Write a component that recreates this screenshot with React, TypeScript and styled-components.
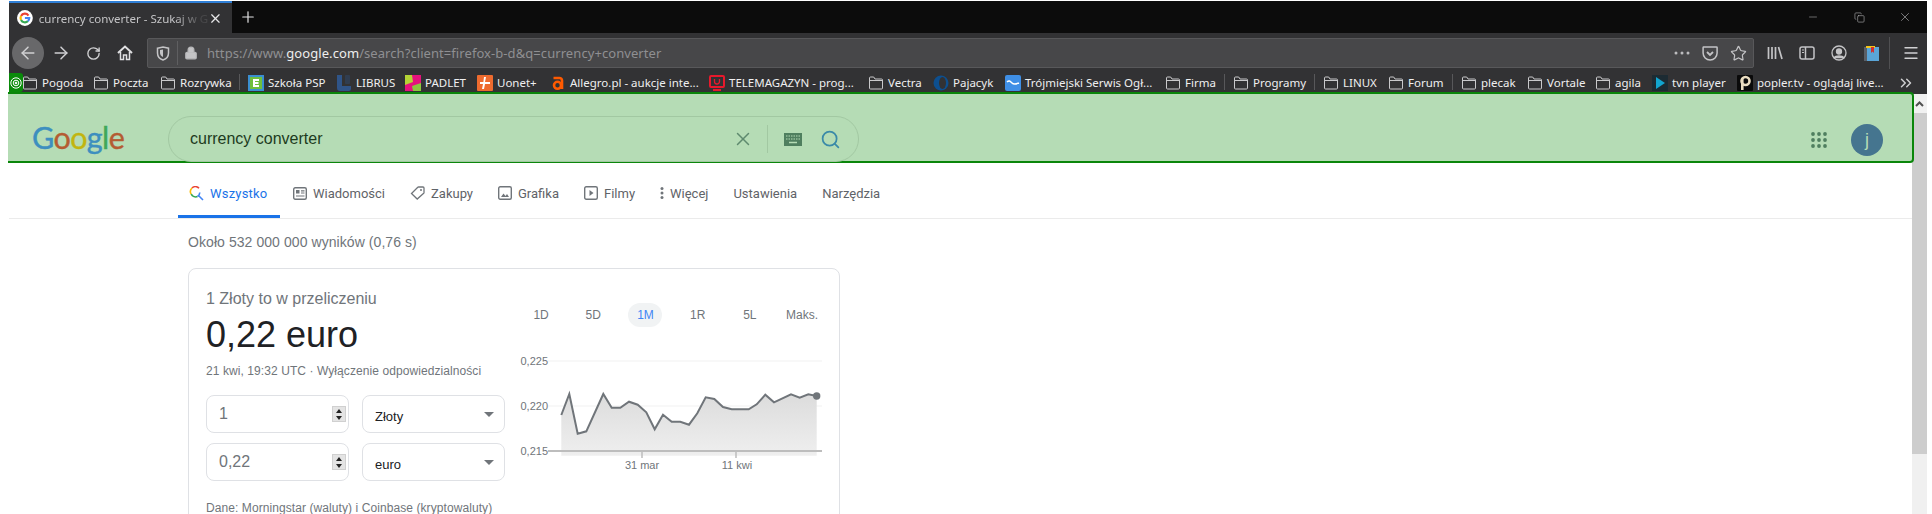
import * as React from "react";
import styled, { createGlobalStyle } from "styled-components";
import { ArrowLeft, ArrowRight, RotateCw, Star, X, Plus, Minus, Search, Copy, Menu, ChevronsRight, Lock } from "lucide-react";

const Global = createGlobalStyle`
    html, body {
        margin: 0;
        padding: 0;
        background: #fff;
        overflow: hidden;
    }
    body {
        width: 1932px;
        height: 514px;
        font-family: "Liberation Sans", Arial, sans-serif;
    }
`;

const Frame = styled.div`
    display: flex;
    flex-direction: column;
    height: 514px;
    padding: 1px 5px 0 9px;
    box-sizing: border-box;
    overflow: hidden;
`;

const TitleBar = styled.div`
    display: flex;
    align-items: stretch;
    height: 32px;
    background: #0c0c0c;
    color: #d7d7d9;
`;

const ActiveTab = styled.div`
    display: flex;
    align-items: center;
    width: 223px;
    box-sizing: border-box;
    padding: 0 9px 0 8px;
    background: #323234;
    border-top: 2px solid #2f7fd6;
`;

const TabTitle = styled.div`
    flex: 1;
    margin-left: 6px;
    white-space: nowrap;
    font-family: "Noto Sans", sans-serif;
    font-size: 11.5px;
    color: #c4c4c6;
    -webkit-mask-image: linear-gradient(to right, #000 80%, rgba(0, 0, 0, 0.15) 96%);
    mask-image: linear-gradient(to right, #000 80%, rgba(0, 0, 0, 0.15) 96%);
`;

const NewTab = styled.div`
    display: flex;
    align-items: center;
    margin-left: 7px;
    color: #e4e4e6;
`;

const WindowControls = styled.div`
    display: flex;
    margin-left: auto;
    margin-right: -1px;
`;

const WindowButton = styled.div`
    display: flex;
    align-items: center;
    justify-content: center;
    width: 46px;
    color: #a8a8aa;
`;

const Toolbar = styled.div`
    display: flex;
    align-items: center;
    height: 40px;
    padding-left: 3px;
    background: #323234;
    color: #d0d0d2;
`;

const NavButton = styled.div<{ $round?: boolean }>`
    display: flex;
    align-items: center;
    justify-content: center;
    width: 32px;
    height: 32px;
    border-radius: 50%;
    background: ${(p) => (p.$round ? "#68686a" : "transparent")};
    margin-right: ${(p) => (p.$round ? "1px" : "0")};
`;

const UrlBar = styled.div`
    flex: 1;
    display: flex;
    align-items: center;
    height: 30px;
    margin: 0 5px 0 6px;
    box-sizing: border-box;
    border: 1px solid #58585a;
    border-radius: 2px;
    background: #474749;
    color: #b8b8ba;
`;

const UrlIcon = styled.div<{ $width: number }>`
    display: flex;
    align-items: center;
    justify-content: center;
    width: ${(p) => p.$width}px;
    flex: none;
`;

const UrlDivider = styled.div`
    width: 1px;
    height: 24px;
    background: #5f5f61;
`;

const UrlText = styled.div`
    margin-left: 3px;
    font-family: "Noto Sans", sans-serif;
    font-size: 13px;
    letter-spacing: 0.07px;
    color: #8f8f92;
    white-space: nowrap;
    b {
        font-weight: 400;
        color: #eeeeee;
    }
`;

const UrlActions = styled.div`
    display: flex;
    align-items: center;
    margin-left: auto;
`;

const ToolbarDivider = styled.div`
    width: 1px;
    height: 32px;
    margin: 0 5px 0 2px;
    background: #505052;
`;

const BookmarksBar = styled.div`
    display: flex;
    align-items: flex-start;
    gap: 12px;
    height: 21px;
    padding-right: 12px;
    background: #323234;
    color: #efeff0;
    position: relative;
`;

const GreenTag = styled.div`
    display: flex;
    align-items: center;
    justify-content: center;
    width: 14px;
    height: 19px;
    margin-right: -13px;
    background: #0a8a0a;
    border-radius: 0 3px 3px 0;
`;

const Bookmark = styled.div`
    display: flex;
    align-items: center;
    gap: 4px;
    height: 19px;
`;

const BookmarkIcon = styled.div`
    display: flex;
    align-items: center;
    justify-content: center;
    width: 16px;
    height: 16px;
    flex: none;
`;

const BookmarkLabel = styled.span<{ $width: number }>`
    width: ${(p) => p.$width}px;
    font-family: "Noto Sans", sans-serif;
    font-size: 11.5px;
    line-height: 19px;
    white-space: nowrap;
`;

const BarSeparator = styled.div`
    width: 1px;
    height: 16px;
    margin: 1px -4px 0 -3px;
    background: #58585a;
`;

const MoreBookmarks = styled.div`
    margin-left: auto;
    display: flex;
    align-items: center;
    height: 19px;
    color: #cfcfd1;
`;

const GoogleHeader = styled.header`
    display: flex;
    align-items: flex-start;
    height: 71px;
    margin: -2px 13px 0 -1px;
    padding: 22px 0 0 24px;
    box-sizing: border-box;
    position: relative;
    z-index: 2;
    background: #b5dcb5;
    border: 2px solid #0a860a;
    border-left: 0;
    border-radius: 0 4px 4px 0;
`;

const Logo = styled.div`
    width: 136px;
    margin-top: 3px;
    font-family: Lato, sans-serif;
    font-size: 30.5px;
    line-height: 36px;
    letter-spacing: -0.6px;
    -webkit-text-stroke: 0.4px currentColor;
`;

const LogoLetter = styled.span<{ $color: string }>`
    color: ${(p) => p.$color};
`;

const SearchPill = styled.div`
    display: flex;
    align-items: center;
    width: 691px;
    height: 46px;
    box-sizing: border-box;
    padding-left: 21px;
    border: 1px solid #a2c8a2;
    border-radius: 23px;
    color: #1d3b1d;
    font-size: 16px;
`;

const PillActions = styled.div`
    display: flex;
    align-items: center;
    margin-left: auto;
    color: #5e8a6e;
`;

const PillDivider = styled.div`
    width: 1px;
    height: 28px;
    margin: 0 16px 0 13px;
    background: #a2c8a2;
`;

const PillSearch = styled.div`
    display: flex;
    margin: 0 17px 0 18px;
    color: #3a8aa8;
`;

const HeaderRight = styled.div`
    display: flex;
    align-items: center;
    gap: 24px;
    height: 46px;
    margin-left: auto;
    margin-right: 29px;
    margin-top: 1px;
`;

const Avatar = styled.div`
    display: flex;
    align-items: center;
    justify-content: center;
    width: 32px;
    height: 32px;
    border-radius: 50%;
    background: #45758f;
    color: #b5dcb5;
    font-size: 18px;
`;

const Viewport = styled.div`
    flex: 1;
    display: flex;
    min-height: 0;
`;

const Content = styled.main`
    flex: 1;
    min-width: 0;
`;

const Scrollbar = styled.div`
    display: flex;
    flex-direction: column;
    width: 15px;
    margin-top: -69px;
    height: 420px;
    background: #f0f0f0;
`;

const ScrollArrow = styled.div`
    display: flex;
    align-items: center;
    justify-content: center;
    height: 19px;
    background: #f1f1f1;
`;

const ScrollThumb = styled.div`
    height: 341px;
    background: #cdcdcd;
`;

const TabsRow = styled.nav`
    display: flex;
    align-items: stretch;
    height: 55px;
    padding-left: 169px;
    border-bottom: 1px solid #ebebeb;
`;

const TabItem = styled.div<{ $active?: boolean }>`
    display: flex;
    align-items: center;
    gap: 6px;
    width: ${(p) => (p.$active ? "102px" : "auto")};
    padding: 8px 12px 0 ${(p) => (p.$active ? "11px" : "12px")};
    margin-right: 1px;
    box-sizing: border-box;
    font-family: Roboto, sans-serif;
    font-size: 13px;
    letter-spacing: ${(p) => (p.$active ? "0.2px" : "0")};
    color: ${(p) => (p.$active ? "#1a73e8" : "#5f6368")};
    border-bottom: 3px solid ${(p) => (p.$active ? "#1a73e8" : "transparent")};
`;

const Stats = styled.div`
    margin: 14px 0 17px 179px;
    font-size: 14px;
    line-height: 18px;
    letter-spacing: 0.07px;
    color: #70757a;
`;

const Card = styled.section`
    display: flex;
    width: 652px;
    height: 320px;
    margin-left: 179px;
    box-sizing: border-box;
    border: 1px solid #dfe1e5;
    border-radius: 8px;
`;

const ConverterColumn = styled.div`
    width: 299px;
    margin-left: 17px;
    padding-top: 20px;
`;

const Heading = styled.div`
    font-size: 16px;
    line-height: 20px;
    color: #70757a;
`;

const Amount = styled.div`
    margin-top: 4px;
    font-size: 36px;
    line-height: 44px;
    color: #202124;
`;

const Disclaimer = styled.div`
    margin-top: 6px;
    font-size: 12px;
    line-height: 16px;
    letter-spacing: 0.08px;
    color: #70757a;
`;

const ConverterForm = styled.div`
    display: grid;
    grid-template-columns: 143px 143px;
    gap: 10px 13px;
    margin-top: 16px;
`;

const Field = styled.div`
    display: flex;
    align-items: center;
    height: 38px;
    box-sizing: border-box;
    border: 1px solid #dfe1e5;
    border-radius: 8px;
    padding: 0 1px 0 12px;
`;

const FieldValue = styled.div`
    flex: 1;
    font-size: 16px;
    color: #70757a;
`;

const Spinner = styled.div`
    display: flex;
    flex-direction: column;
    width: 14px;
    height: 16px;
    margin-right: 1px;
    background: #e4e4e4;
    border: 1px solid #d0d0d0;
    box-sizing: border-box;
`;

const SpinnerHalf = styled.div<{ $up?: boolean }>`
    flex: 1;
    display: flex;
    align-items: center;
    justify-content: center;
    &::after {
        content: "";
        border-left: 3px solid transparent;
        border-right: 3px solid transparent;
        ${(p) => (p.$up ? "border-bottom: 4px solid #222;" : "border-top: 4px solid #222;")}
    }
`;

const SelectValue = styled.div`
    flex: 1;
    padding-top: 5px;
    font-size: 13px;
    color: #202124;
`;

const Caret = styled.div`
    margin: 0 9px 0 0;
    border-left: 5px solid transparent;
    border-right: 5px solid transparent;
    border-top: 5px solid #70757a;
`;

const Source = styled.div`
    margin-top: 19px;
    font-size: 12px;
    line-height: 16px;
    letter-spacing: 0.08px;
    color: #70757a;
    white-space: nowrap;
`;

const ChartColumn = styled.div`
    width: 316px;
    margin-left: 10px;
    padding-top: 34px;
`;

const RangeRow = styled.div`
    display: flex;
`;

const RangeButton = styled.div<{ $active?: boolean }>`
    display: flex;
    align-items: center;
    justify-content: center;
    width: 52.2px;
    height: 24px;
    font-size: 12px;
    color: ${(p) => (p.$active ? "#4285f4" : "#70757a")};
`;

const RangePill = styled.span`
    display: flex;
    align-items: center;
    justify-content: center;
    width: 34px;
    height: 24px;
    border-radius: 12px;
    background: #f1f3f4;
`;

const ChartSvg = styled.svg`
    display: block;
    width: 316px;
    height: 140px;
    margin-top: 13px;
    font-family: "Liberation Sans", Arial, sans-serif;
    font-size: 11px;
`;

const Folder = () => (
    <svg width="16" height="14" viewBox="0 0 16 14" fill="none" stroke="#c9c9cb" strokeWidth="1">
        <path d="M1.5 3V2a1 1 0 0 1 1-1h3.2l1.3 2h6.5a1 1 0 0 1 1 1v8a1 1 0 0 1-1 1h-11a1 1 0 0 1-1-1z" />
        <path d="M1.5 4.5h13" />
    </svg>
);

const BookmarkGlyph = ({ kind }: { kind: string }) => {
    switch (kind) {
        case "school":
            return (
                <svg width="16" height="16" viewBox="0 0 16 16">
                    <rect width="16" height="16" fill="#3a8fd0" />
                    <rect x="2" y="2" width="12" height="12" fill="#6fbf3c" />
                    <path d="M5 4h6v2H7v1h3.500v2H7v1h4v2H5z" fill="#fff" />
                </svg>
            );
        case "librus":
            return (
                <svg width="16" height="16" viewBox="0 0 16 16">
                    <path d="M1 0h5v11h9v3a2 2 0 0 1-2 2H4a3 3 0 0 1-3-3z" fill="#2f5488" />
                    <rect x="9" y="0" width="5" height="9" rx="1" fill="#2f5488" opacity="0.35" />
                </svg>
            );
        case "padlet":
            return (
                <svg width="16" height="16" viewBox="0 0 16 16">
                    <rect width="16" height="16" fill="#e5127d" />
                    <path d="M0 0h7l1 7-8 3z" fill="#b4d335" />
                    <path d="M8 16l-1-5 9-3v8z" fill="#8cc63f" />
                </svg>
            );
        case "uonet":
            return (
                <svg width="16" height="16" viewBox="0 0 16 16">
                    <rect width="16" height="16" rx="1" fill="#ee6b2f" />
                    <path d="M9 2l-1 5h5v2H8l-1 5H5l1-5H3V7h3.400L7 2z" fill="#fff" />
                </svg>
            );
        case "allegro":
            return (
                <svg width="16" height="16" viewBox="0 0 16 16" fill="none" stroke="#ff5a00" strokeWidth="2.600">
                    <path d="M3.500 3h6a2.500 2.500 0 0 1 2.500 2.500V14" />
                    <circle cx="7.500" cy="10.300" r="3.500" />
                </svg>
            );
        case "tele":
            return (
                <svg width="16" height="16" viewBox="0 0 16 16" fill="none" stroke="#e8192c" strokeWidth="2">
                    <rect x="1" y="1" width="14" height="11" rx="1" />
                    <path d="M5.500 4v2.500a2.500 2.500 0 0 0 5 0V4" strokeWidth="1.300" />
                    <path d="M4 15h8" />
                </svg>
            );
        case "pajacyk":
            return (
                <svg width="16" height="16" viewBox="0 0 16 16">
                    <circle cx="8" cy="8" r="7.500" fill="#0d4f8f" />
                    <ellipse cx="9.500" cy="8" rx="3.500" ry="6" fill="#323234" />
                </svg>
            );
        case "tricity":
            return (
                <svg width="16" height="16" viewBox="0 0 16 16">
                    <rect width="16" height="16" rx="2" fill="#3f8fe6" />
                    <path d="M2 7c2-2 3-1 5 1s4 1 7 0" fill="none" stroke="#fff" strokeWidth="1.500" />
                </svg>
            );
        case "tvn":
            return (
                <svg width="16" height="16" viewBox="0 0 16 16">
                    <rect width="16" height="16" fill="#1c2b33" />
                    <path d="M4 2l9 6-9 6z" fill="#12a5cf" />
                </svg>
            );
        case "popler":
            return (
                <svg width="16" height="16" viewBox="0 0 16 16">
                    <rect width="16" height="16" rx="1" fill="#0a0a0a" />
                    <circle cx="8.500" cy="6" r="4" fill="none" stroke="#e9dcc0" strokeWidth="2.600" />
                    <rect x="4" y="3" width="2.600" height="12" fill="#e9dcc0" />
                </svg>
            );
        default:
            return <Folder />;
    }
};

const firstBookmarks: [string, string, number][] = [
    ["folder", "Pogoda", 39],
    ["folder", "Poczta", 35],
    ["folder", "Rozrywka", 50],
];

const secondBookmarks: [string, string, number][] = [
    ["school", "Szkoła PSP", 56],
    ["librus", "LIBRUS", 37],
    ["padlet", "PADLET", 40],
    ["uonet", "Uonet+", 41],
    ["allegro", "Allegro.pl - aukcje inte...", 127],
    ["tele", "TELEMAGAZYN - prog...", 127],
    ["folder", "Vectra", 33],
    ["pajacyk", "Pajacyk", 40],
    ["tricity", "Trójmiejski Serwis Ogł...", 128],
    ["folder", "Firma", 30],
];

const thirdBookmarks: [string, string, number][] = [["folder", "Programy", 52]];

const fourthBookmarks: [string, string, number][] = [
    ["folder", "LINUX", 33],
    ["folder", "Forum", 35],
];

const fifthBookmarks: [string, string, number][] = [
    ["folder", "plecak", 34],
    ["folder", "Vortale", 36],
    ["folder", "agila", 25],
    ["tvn", "tvn player", 53],
    ["popler", "popler.tv - oglądaj live...", 126],
];

const renderBookmarks = (items: [string, string, number][]) =>
    items.map(([kind, label, width]) => (
        <Bookmark key={label}>
            <BookmarkIcon>
                <BookmarkGlyph kind={kind} />
            </BookmarkIcon>
            <BookmarkLabel $width={width}>{label}</BookmarkLabel>
        </Bookmark>
    ));

const Favicon = () => (
    <svg width="16" height="16" viewBox="0 0 16 16" fill="none" strokeWidth="2.200">
        <circle cx="8" cy="8" r="8" fill="#fff" stroke="none" />
        <path d="M11.600 5.500A4.400 4.400 0 0 0 4.100 6" stroke="#ea4335" />
        <path d="M4.100 6A4.400 4.400 0 0 0 4.100 10" stroke="#fbbc05" />
        <path d="M4.100 10A4.400 4.400 0 0 0 11 11.200" stroke="#34a853" />
        <path d="M11 11.200A4.400 4.400 0 0 0 12.400 8H8" stroke="#4285f4" />
    </svg>
);

const chartPoints =
    "562.3,415 570.3,394 578.7,433.7 587.3,431.3 604.3,394 612.7,407.7 621.3,407.7 630,401.7 638.7,404.7 647.3,412.3 655.7,429.3 664,414.7 672.7,421.7 681.3,421.7 690,424.7 698.3,413.3 706.7,397.3 715.3,399 724,407 732.7,409.3 749.7,409.3 757.7,404.3 766.3,394.7 775,402.3 792,394.3 800.7,397.7 809.3,394.3 817.7,396";

const ranges = ["1D", "5D", "1M", "1R", "5L", "Maks."];

const App = () => {
    return (
        <>
            <Global />
            <Frame>
                <TitleBar>
                    <ActiveTab>
                        <Favicon />
                        <TabTitle>currency converter - Szukaj w G</TabTitle>
                        <X size={15} strokeWidth={2} color="#e8e8ea" />
                    </ActiveTab>
                    <NewTab>
                        <Plus size={18} strokeWidth={1.6} />
                    </NewTab>
                    <WindowControls>
                        <WindowButton>
                            <Minus size={12} strokeWidth={1.2} />
                        </WindowButton>
                        <WindowButton>
                            <Copy size={11} strokeWidth={1.4} />
                        </WindowButton>
                        <WindowButton>
                            <X size={14} strokeWidth={1.2} />
                        </WindowButton>
                    </WindowControls>
                </TitleBar>

                <Toolbar>
                    <NavButton $round>
                        <ArrowLeft size={20} strokeWidth={1.8} />
                    </NavButton>
                    <NavButton>
                        <ArrowRight size={20} strokeWidth={1.8} />
                    </NavButton>
                    <NavButton>
                        <RotateCw size={15} strokeWidth={2.2} />
                    </NavButton>
                    <NavButton>
                        <svg width="16" height="16" viewBox="0 0 16 16" fill="none" stroke="#e0e0e2" strokeWidth="2">
                            <path d="M1 8l7-6.500L15 8" />
                            <path d="M3.500 7v7.500h3V10h3v4.500h3V7" strokeWidth="1.500" />
                        </svg>
                    </NavButton>
                    <UrlBar>
                        <UrlIcon $width={29}>
                            <svg width="14" height="15" viewBox="0 0 14 15" fill="none" stroke="#c4c4c6" strokeWidth="1.500">
                                <path d="M1.500 2.200L7 1l5.500 1.200V7c0 3.500-2.500 6-5.500 7-3-1-5.500-3.500-5.500-7z" />
                                <path d="M4 4l3-.6V11C5 10 4 8.500 4 7z" fill="#c4c4c6" stroke="none" />
                            </svg>
                        </UrlIcon>
                        <UrlDivider />
                        <UrlIcon $width={26}>
                            <Lock size={14} fill="#c4c4c6" strokeWidth={2} />
                        </UrlIcon>
                        <UrlText>
                            https://www.<b>google.com</b>/search?client=firefox-b-d&amp;q=currency+converter
                        </UrlText>
                        <UrlActions>
                            <UrlIcon $width={28}>
                                <svg width="16" height="4" viewBox="0 0 16 4" fill="#bdbdbf">
                                    <circle cx="2" cy="2" r="1.500" />
                                    <circle cx="8" cy="2" r="1.500" />
                                    <circle cx="14" cy="2" r="1.500" />
                                </svg>
                            </UrlIcon>
                            <UrlIcon $width={28}>
                                <svg width="16" height="15" viewBox="0 0 16 15" fill="none" stroke="#c4c4c6" strokeWidth="1.500">
                                    <path d="M1.500 1h13a.6.6 0 0 1 .6.6V7a7 7 0 0 1-14 0V1.600a.6.6 0 0 1 .4-.6z" />
                                    <path d="M5 6l3 3 3-3" strokeWidth="1.800" />
                                </svg>
                            </UrlIcon>
                            <UrlIcon $width={28}>
                                <Star size={17} strokeWidth={1.7} color="#c4c4c6" />
                            </UrlIcon>
                            <UrlIcon $width={1} />
                        </UrlActions>
                    </UrlBar>
                    <NavButton>
                        <svg width="16" height="14" viewBox="0 0 16 14" fill="none" stroke="#c4c4c6" strokeWidth="1.700">
                            <path d="M1.500 1v12M5 1v12M8.500 1v12M11.500 1l3.500 12" />
                        </svg>
                    </NavButton>
                    <NavButton>
                        <svg width="16" height="14" viewBox="0 0 16 14" fill="none" stroke="#c4c4c6" strokeWidth="1.500">
                            <rect x="1" y="1" width="14" height="12" rx="2" />
                            <path d="M6.500 1v12" />
                            <path d="M3 4h2M3 6.500h2" strokeWidth="1" />
                        </svg>
                    </NavButton>
                    <NavButton>
                        <svg width="16" height="16" viewBox="0 0 16 16" fill="none" stroke="#c4c4c6" strokeWidth="1.300">
                            <circle cx="8" cy="8" r="7" />
                            <circle cx="8" cy="6.500" r="2.500" fill="#c4c4c6" />
                            <path d="M3.500 12.500c1-2 8-2 9 0z" fill="#c4c4c6" />
                        </svg>
                    </NavButton>
                    <NavButton>
                        <svg width="15" height="15" viewBox="0 0 15 15">
                            <rect x="0" y="1" width="4" height="14" fill="#5a5f66" />
                            <rect x="3" y="1" width="12" height="14" fill="#5aa5d8" />
                            <rect x="2" y="0" width="9" height="2" fill="#f5c518" />
                            <path d="M7 1h3v6L8.500 5.500 7 7z" fill="#d0302f" />
                        </svg>
                    </NavButton>
                    <ToolbarDivider />
                    <NavButton>
                        <Menu size={18} strokeWidth={1.8} />
                    </NavButton>
                </Toolbar>

                <BookmarksBar>
                    <GreenTag>
                        <svg width="12" height="12" viewBox="0 0 12 12" fill="none" stroke="#fff" strokeWidth="1">
                            <circle cx="6" cy="6" r="5.200" />
                            <circle cx="6" cy="6" r="2.800" />
                            <circle cx="6" cy="6" r="0.900" fill="#fff" />
                        </svg>
                    </GreenTag>
                    {renderBookmarks(firstBookmarks)}
                    <BarSeparator />
                    {renderBookmarks(secondBookmarks)}
                    <BarSeparator />
                    {renderBookmarks(thirdBookmarks)}
                    <BarSeparator />
                    {renderBookmarks(fourthBookmarks)}
                    <BarSeparator />
                    {renderBookmarks(fifthBookmarks)}
                    <MoreBookmarks>
                        <ChevronsRight size={18} strokeWidth={2} />
                    </MoreBookmarks>
                </BookmarksBar>

                <GoogleHeader>
                    <Logo>
                        <LogoLetter $color="#3d8fbf">G</LogoLetter>
                        <LogoLetter $color="#b45c32">o</LogoLetter>
                        <LogoLetter $color="#c2b50f">o</LogoLetter>
                        <LogoLetter $color="#3d8fbf">g</LogoLetter>
                        <LogoLetter $color="#3fa85a">l</LogoLetter>
                        <LogoLetter $color="#b45c32">e</LogoLetter>
                    </Logo>
                    <SearchPill>
                        currency converter
                        <PillActions>
                            <X size={22} strokeWidth={1.6} />
                            <PillDivider />
                            <svg width="18" height="13" viewBox="0 0 18 13">
                                <rect width="18" height="13" fill="#4f7f5f" />
                                <path d="M2 3h14M2 6h14" stroke="#b5dcb5" strokeWidth="1.200" strokeDasharray="1.500 1" />
                                <path d="M5 9.500h8" stroke="#b5dcb5" strokeWidth="1.500" />
                            </svg>
                            <PillSearch>
                                <Search size={21} strokeWidth={2} />
                            </PillSearch>
                        </PillActions>
                    </SearchPill>
                    <HeaderRight>
                        <svg width="16" height="16" viewBox="0 0 16 16" fill="#4f7f5f">
                            {[2, 8, 14].map((y) =>
                                [2, 8, 14].map((x) => <circle key={`${x}-${y}`} cx={x} cy={y} r="1.900" />)
                            )}
                        </svg>
                        <Avatar>j</Avatar>
                    </HeaderRight>
                </GoogleHeader>

                <Viewport>
                    <Content>
                        <TabsRow>
                            <TabItem $active>
                                <svg width="15" height="15" viewBox="0 0 15 15" fill="none" strokeWidth="1.600">
                                    <path d="M10 2.200A5 5 0 0 0 3 2" stroke="#ea4335" />
                                    <path d="M3 2a5 5 0 0 0-.8 6.200" stroke="#fbbc05" />
                                    <path d="M2.200 8.200A5 5 0 0 0 8.500 10.500" stroke="#34a853" />
                                    <path d="M8.500 10.500a5 5 0 0 0 2.300-4M9.500 9.500l4.500 4.500" stroke="#4285f4" />
                                </svg>
                                Wszystko
                            </TabItem>
                            <TabItem>
                                <svg width="14" height="13" viewBox="0 0 14 13" fill="none" stroke="#70757a" strokeWidth="1.400">
                                    <rect x="0.700" y="0.700" width="12.600" height="11.600" rx="1.500" />
                                    <rect x="3" y="3" width="3.500" height="3.500" fill="#70757a" stroke="none" />
                                    <path d="M8 3.800h3.500M8 6h3.500M3 9h8.500" strokeWidth="1.200" />
                                </svg>
                                Wiadomości
                            </TabItem>
                            <TabItem>
                                <svg width="15" height="14" viewBox="0 0 15 14" fill="none" stroke="#70757a" strokeWidth="1.300">
                                    <path d="M8.500 1H13a1 1 0 0 1 1 1v4.500a1 1 0 0 1-.3.700L7.200 13 1.500 7.500 7.800 1.300A1 1 0 0 1 8.500 1z" />
                                    <circle cx="11" cy="4" r="1" fill="#70757a" stroke="none" />
                                </svg>
                                Zakupy
                            </TabItem>
                            <TabItem>
                                <svg width="14" height="14" viewBox="0 0 14 14" fill="none" stroke="#70757a" strokeWidth="1.400">
                                    <rect x="0.700" y="0.700" width="12.600" height="12.600" rx="1.500" />
                                    <path d="M3 11l2.500-3.500 2 2.500L9 8l2 3z" fill="#70757a" stroke="none" />
                                </svg>
                                Grafika
                            </TabItem>
                            <TabItem>
                                <svg width="14" height="14" viewBox="0 0 14 14" fill="none" stroke="#70757a" strokeWidth="1.400">
                                    <rect x="0.700" y="0.700" width="12.600" height="12.600" rx="1.500" />
                                    <path d="M5.500 4l4 3-4 3z" fill="#70757a" stroke="none" />
                                </svg>
                                Filmy
                            </TabItem>
                            <TabItem>
                                <svg width="4" height="14" viewBox="0 0 4 14" fill="#70757a">
                                    <circle cx="2" cy="2.500" r="1.500" />
                                    <circle cx="2" cy="7" r="1.500" />
                                    <circle cx="2" cy="11.500" r="1.500" />
                                </svg>
                                Więcej
                            </TabItem>
                            <TabItem>Ustawienia</TabItem>
                            <TabItem>Narzędzia</TabItem>
                        </TabsRow>

                        <Stats>Około 532 000 000 wyników (0,76 s)</Stats>

                        <Card>
                            <ConverterColumn>
                                <Heading>1 Złoty to w przeliczeniu</Heading>
                                <Amount>0,22 euro</Amount>
                                <Disclaimer>21 kwi, 19:32 UTC · Wyłączenie odpowiedzialności</Disclaimer>
                                <ConverterForm>
                                    <Field>
                                        <FieldValue>1</FieldValue>
                                        <Spinner>
                                            <SpinnerHalf $up />
                                            <SpinnerHalf />
                                        </Spinner>
                                    </Field>
                                    <Field>
                                        <SelectValue>Złoty</SelectValue>
                                        <Caret />
                                    </Field>
                                    <Field>
                                        <FieldValue>0,22</FieldValue>
                                        <Spinner>
                                            <SpinnerHalf $up />
                                            <SpinnerHalf />
                                        </Spinner>
                                    </Field>
                                    <Field>
                                        <SelectValue>euro</SelectValue>
                                        <Caret />
                                    </Field>
                                </ConverterForm>
                                <Source>Dane: Morningstar (waluty) i Coinbase (kryptowaluty)</Source>
                            </ConverterColumn>
                            <ChartColumn>
                                <RangeRow>
                                    {ranges.map((range) => (
                                        <RangeButton key={range} $active={range === "1M"}>
                                            {range === "1M" ? <RangePill>{range}</RangePill> : range}
                                        </RangeButton>
                                    ))}
                                </RangeRow>
                                <ChartSvg viewBox="516 340 316 140">
                                    <defs>
                                        <linearGradient id="area" x1="0" y1="0" x2="0" y2="1">
                                            <stop offset="0" stopColor="#dcdcdc" />
                                            <stop offset="1" stopColor="#efefef" />
                                        </linearGradient>
                                    </defs>
                                    <path d="M549 361H823M549 406H823" stroke="#f6f6f6" strokeWidth="1.500" />
                                    <polygon points={`562.3,455.7 ${chartPoints} 817.7,455.7`} fill="url(#area)" />
                                    <path d="M549 451H823" stroke="#bdbdbd" strokeWidth="2" />
                                    <path d="M643 451v7M737 451v7" stroke="#bdbdbd" strokeWidth="1.500" />
                                    <polyline points={chartPoints} fill="none" stroke="#70757a" strokeWidth="2" />
                                    <circle cx="817.7" cy="396" r="3.700" fill="#70757a" />
                                    <g fill="#70757a" textAnchor="end">
                                        <text x="549" y="365">0,225</text>
                                        <text x="549" y="410">0,220</text>
                                        <text x="549" y="455">0,215</text>
                                    </g>
                                    <g fill="#70757a" textAnchor="middle">
                                        <text x="643" y="469">31 mar</text>
                                        <text x="738" y="469">11 kwi</text>
                                    </g>
                                </ChartSvg>
                            </ChartColumn>
                        </Card>
                    </Content>
                    <Scrollbar>
                        <ScrollArrow>
                            <svg width="9" height="6" viewBox="0 0 9 6" fill="none" stroke="#505050" strokeWidth="2">
                                <path d="M1 5l3.500-3.500L8 5" />
                            </svg>
                        </ScrollArrow>
                        <ScrollThumb />
                    </Scrollbar>
                </Viewport>
            </Frame>
        </>
    );
};

export default App;
